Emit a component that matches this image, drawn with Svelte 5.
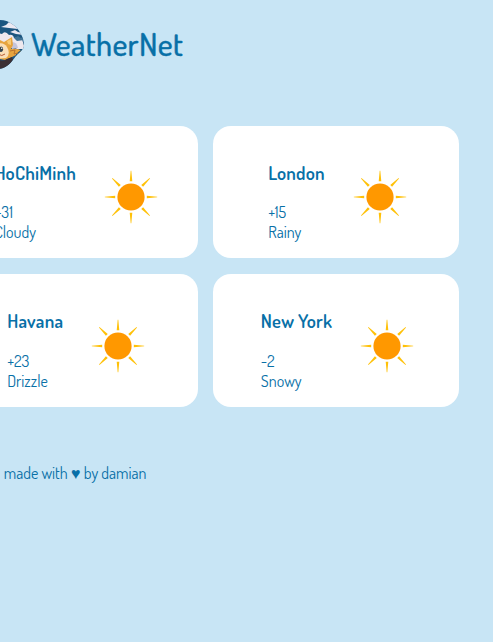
<script>
  const cities = [
    { name: 'HoChiMinh', temp: '+31', sky: 'Cloudy' },
    { name: 'London', temp: '+15', sky: 'Rainy' },
    { name: 'Havana', temp: '+23', sky: 'Drizzle' },
    { name: 'New York', temp: '-2', sky: 'Snowy' }
  ];
  const rays = [0, 45, 90, 135, 180, 225, 270, 315];
</script>

<div class="page">
  <header>
    <svg class="logo" width="49" height="50" viewBox="-25 0 49 50" aria-hidden="true">
      <defs>
        <clipPath id="badge">
          <path d="M-2 0 C4 0 8 1 12 4 C19 8 24 18 24 25 C24 30 20 31 16 36 C11 43 6 49 -2 49 C-17 49 -25 38 -25 25 C-25 11 -16 0 -2 0Z" />
        </clipPath>
      </defs>
      <g clip-path="url(#badge)">
        <rect x="-25" width="50" height="50" fill="#1c5680" />
        <path d="M1 7 L6 5 L9 2 L20 7 L18 9 L9 8Z" fill="#eceaf3" />
        <path d="M10 12 L15 10 L18 12 L23 13 L24 15 L16 14Z" fill="#e9e7f1" />
        <path d="M-4 18 Q-3 12 2 14 Q5 10 9 15 Q13 14 14 18 Q18 17 19 20 L22 19 L25 29 L17 29 Q15 27 12 28 L-4 29Z" fill="#eee8ee" />
        <path d="M14 18 L18 16 L21 18 L23 17 L24 20 L17 21Z" fill="#3f7396" />
        <path d="M12 22 Q17 22 18 28 L12 29Z" fill="#c4c4da" />
        <path d="M-5 22 L0 20 L4 22 L12 17 L13 25 L11 29 Q18 28 22 31 L18 34 L12 37 L5 40 L-5 38Z" fill="#e6a43f" />
        <path d="M7 21 L11 19 L11 25 L8 24Z" fill="#f8cb75" />
        <path d="M-5 26 Q2 20 7 27 Q11 34 6 38 L-5 39Z" fill="#fadfb8" />
        <ellipse cx="1.3" cy="29.3" rx="1.8" ry="2.7" fill="#36454f" />
        <circle cx="1.7" cy="28.3" r=".7" fill="white" />
        <path d="M-2 34 Q2 37 5 34" stroke="#b65a35" fill="none" />
        <path d="M-5 39 Q3 42 7 39 L12 37 L13 40 L5 50 L-5 50Z" fill="#3c3034" />
        <path d="M16 34 L22 29 L24 35 L17 41Z" fill="#1c5680" />
        <path d="M10 31 L15 30 L14 34 L18 33" stroke="#b8722e" fill="none" />
      </g>
    </svg>
    <h1>WeatherNet</h1>
  </header>

  <main>
    {#each cities as city}
      <article>
        <div class="details">
          <h3>{city.name}</h3>
          <p>{city.temp}</p>
          <p>{city.sky}</p>
        </div>
        <svg class="sun" width="50" height="54" viewBox="-25 -27 50 54" aria-hidden="true">
          <circle r="13.6" fill="#ff9800" />
          {#each rays as angle}
            <path
              d={angle % 90 ? 'M-1.3 -15.8 L1.3 -15.8 L.3 -26.6 L-.3 -26.6Z' : 'M-1.3 -15.8 L1.3 -15.8 L.3 -26.2 L-.3 -26.2Z'}
              fill="#ffc107"
              transform="rotate({angle})"
            />
          {/each}
        </svg>
      </article>
    {/each}
  </main>

  <footer>made with ♥ by damian</footer>
</div>

<style>
  :global(body) { margin: 0; background: #c8e5f5; }
  .page {
    box-sizing: border-box;
    width: 100%;
    height: 642px;
    overflow: hidden;
    background: #c8e5f5;
    color: #0870a7;
    font: 400 16px/20px Dosis, Roboto, sans-serif;
  }
  svg { display: block; flex: none; overflow: visible; }
  header { display: flex; align-items: flex-start; gap: 7px; padding-top: 20px; margin-left: -25px; height: 126px; box-sizing: border-box; }
  h1, h3, p { margin: 0; white-space: nowrap; }
  h1 { padding-top: 3px; font-size: 32px; line-height: 42px; font-weight: 500; letter-spacing: 0.36px; -webkit-text-stroke: 0.3px currentColor; }
  main { display: grid; grid-template-columns: 246px 246px; grid-template-rows: 132px 133px; gap: 16px 15px; width: 507px; margin-left: -48px; }
  article { display: flex; justify-content: center; align-items: flex-start; gap: 30px; padding-left: 1px; border-radius: 18px; background: white; }
  article:nth-child(odd) { padding-left: 0.4px; }
  .details { padding-top: 35px; }
  h3 { margin-bottom: 17px; font-size: 18.72px; line-height: 24px; font-weight: 600; letter-spacing: 0.2px; }
  .sun { margin-top: 44.3px; }
  article:nth-child(n + 3) .sun { margin-top: 45.3px; }
  article:nth-child(n + 3) h3 { margin-bottom: 18px; }
  footer { padding: 56px 0 0 3.7px; }
</style>
